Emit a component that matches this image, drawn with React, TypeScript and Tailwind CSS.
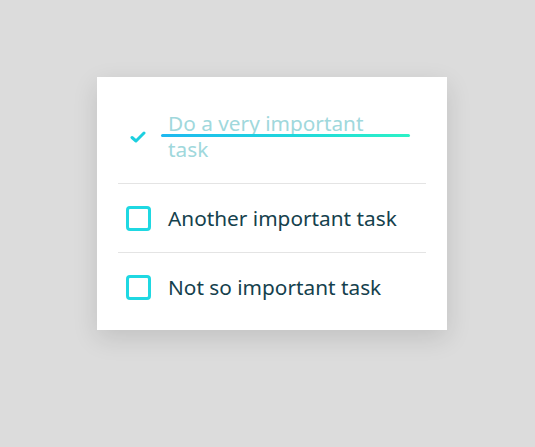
const tasks = [
  { label: "Do a very important task", done: true },
  { label: "Another important task", done: false },
  { label: "Not so important task", done: false },
];

function Check() {
  return (
    <svg width="16" height="12" viewBox="0 0 16 12" className="text-[#1ccfdf]">
      <path
        d="M2 6.5 L6 10 L14 2"
        fill="none"
        stroke="currentColor"
        strokeWidth="3"
        strokeLinecap="round"
        strokeLinejoin="round"
      />
    </svg>
  );
}

export default function App() {
  return (
    <div
      className="min-h-[447px] bg-[#dcdcdc] pt-[77px] pl-[97px]"
      style={{ fontFamily: '"Noto Sans", "Open Sans", sans-serif' }}
    >
      <div className="w-[350px] h-[253px] bg-white px-[21px] pt-[12px] shadow-[0_8px_24px_rgba(0,0,0,0.12)]">
        {tasks.map((t, i) => (
          <div
            key={t.label}
            className={`flex items-center py-[21px] pl-[8px] pr-[16px] ${
              i > 0 ? "border-t border-[#e4e4e4]" : ""
            }`}
          >
            <div className="w-[26px] flex justify-start">
              {t.done ? (
                <span className="pl-[4px] pt-[2px]">
                  <Check />
                </span>
              ) : (
                <span className="block w-[25px] h-[25px] rounded-[4px] border-[3px] border-[#1fd8e2]" />
              )}
            </div>
            <div className="relative ml-[16px] flex-1">
              <span
                className={`block text-[20.8px] leading-[26px] ${
                  t.done ? "max-w-[215px] text-[#a0d8dc]" : "text-[#15414d]"
                }`}
              >
                {t.label}
              </span>
              {t.done && (
                <span className="absolute left-[-7px] right-0 top-[24px] h-[3px] rounded-full bg-gradient-to-r from-[#1eb8f0] to-[#2cf2c6]" />
              )}
            </div>
          </div>
        ))}
      </div>
    </div>
  );
}
